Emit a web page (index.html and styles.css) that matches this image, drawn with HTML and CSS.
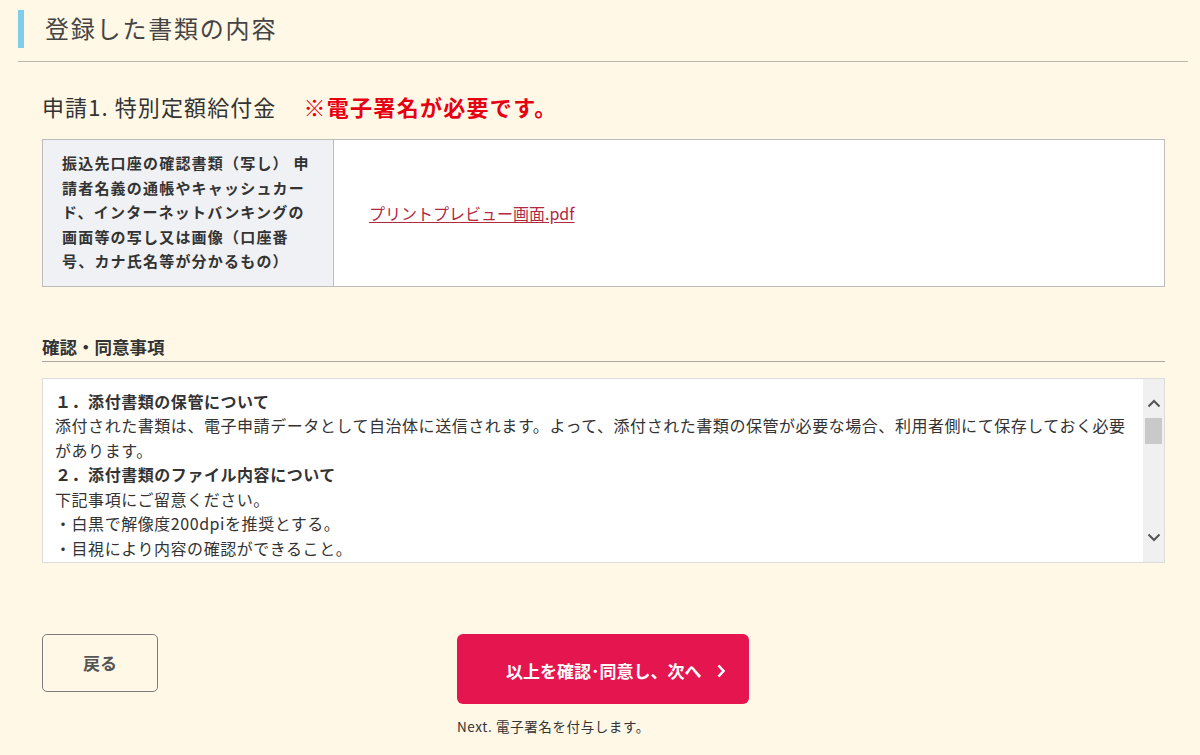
FILE: index.html
```html
<!DOCTYPE html>
<html lang="ja">
<head>
<meta charset="utf-8">
<title>登録した書類の内容</title>
<link rel="stylesheet" href="styles.css">
</head>
<body>
<div class="page">
  <header class="page-head">
    <h1 class="page-title">登録した書類の内容</h1>
  </header>

  <section class="content">
    <h2 class="apply-title">申請1. 特別定額給付金<span class="warn">※電子署名が必要です。</span></h2>

    <table class="doc-table">
      <tr>
        <th class="doc-label">振込先口座の確認書類（写し） 申<br>請者名義の通帳やキャッシュカー<br>ド、インターネットバンキングの<br>画面等の写し又は画像（口座番<br>号、カナ氏名等が分かるもの）</th>
        <td class="doc-file"><a href="#" class="file-link">プリントプレビュー画面.pdf</a></td>
      </tr>
    </table>

    <h3 class="agree-title">確認・同意事項</h3>

    <div class="agree-box">
      <div class="agree-text">
        <p class="agree-h">１．添付書類の保管について</p>
        <p>添付された書類は、電子申請データとして自治体に送信されます。よって、添付された書類の保管が必要な場合、利用者側にて保存しておく必要があります。</p>
        <p class="agree-h">２．添付書類のファイル内容について</p>
        <p>下記事項にご留意ください。</p>
        <p>・白黒で解像度200dpiを推奨とする。</p>
        <p>・目視により内容の確認ができること。</p>
      </div>
      <div class="fake-scroll">
        <svg class="sc-arrow" width="14" height="9" viewBox="0 0 14 9"><path d="M1.5 7.5 L7 2 L12.5 7.5" fill="none" stroke="#555" stroke-width="2"/></svg>
        <div class="sc-track"><div class="sc-thumb"></div></div>
        <svg class="sc-arrow" width="14" height="9" viewBox="0 0 14 9"><path d="M1.5 1.5 L7 7 L12.5 1.5" fill="none" stroke="#555" stroke-width="2"/></svg>
      </div>
    </div>

    <div class="actions">
      <button class="btn-back" type="button">戻る</button>
      <div class="next-group">
        <button class="btn-next" type="button">以上を確認･同意し、次へ<svg class="chev" width="10" height="14" viewBox="0 0 10 14"><path d="M2.5 1.5 L7.5 7 L2.5 12.5" fill="none" stroke="#fff" stroke-width="2.6"/></svg></button>
        <p class="next-note">Next. 電子署名を付与します。</p>
      </div>
    </div>
  </section>
</div>
</body>
</html>
```

FILE: styles.css
```css
html, body {
  margin: 0;
  padding: 0;
  background: #fff8e6;
}
body {
  font-family: "Noto Sans CJK JP", "Noto Sans", sans-serif;
  color: #333;
  width: 1200px;
  height: 755px;
  overflow: hidden;
}
.page {
  padding: 10px 12px 0 18px;
}
.page-head {
  border-bottom: 1px solid #b9b6ae;
  padding-bottom: 13px;
}
.page-title {
  margin: 0;
  height: 38px;
  border-left: 6px solid #7fcdea;
  padding-left: 21px;
  font-size: 24px;
  letter-spacing: 1.8px;
  font-weight: normal;
  line-height: 36px;
  color: #444;
}
.content {
  padding: 0 23px 0 24px;
}
.apply-title {
  margin: 29px 0 0 0;
  font-size: 22px;
  line-height: 30px;
  font-weight: normal;
  color: #333;
  letter-spacing: 1.1px;
}
.warn {
  margin-left: 27px;
  color: #e60012;
  font-weight: bold;
  font-size: 22px;
  letter-spacing: 1.3px;
}
.doc-table {
  margin-top: 18px;
  width: 100%;
  border-collapse: collapse;
  background: #fff;
}
.doc-label {
  width: 252px;
  background: #eff1f4;
  border: 1px solid #bcbcbc;
  padding: 11px 19px 12px 19px;
  text-align: left;
  font-size: 15px;
  letter-spacing: 1.2px;
  line-height: 24.5px;
  font-weight: bold;
  white-space: nowrap;
  color: #333;
}
.doc-file {
  border: 1px solid #bcbcbc;
  padding: 0 0 0 35px;
  vertical-align: middle;
}
.file-link {
  color: #b2283f;
  font-size: 16px;
  text-decoration: underline;
  text-underline-offset: 2px;
}
.agree-title {
  margin: 47px 0 0 0;
  font-size: 17.5px;
  line-height: 26px;
  font-weight: bold;
  padding-bottom: 1px;
  border-bottom: 1px solid #a9a6a0;
  color: #333;
}
.agree-box {
  margin-top: 16px;
  height: 183px;
  border: 1px solid #dcdcdc;
  background: #fff;
  display: flex;
  overflow: hidden;
}
.agree-text {
  flex: 1;
  padding: 10px 4px 0 12px;
  overflow: hidden;
  font-size: 16px;
  letter-spacing: 0.55px;
  line-height: 24.5px;
  color: #333;
}
.agree-text p {
  margin: 0;
}
.agree-text .agree-h {
  font-weight: bold;
}
.fake-scroll {
  width: 21px;
  background: #f0f0f0;
  display: flex;
  flex-direction: column;
  align-items: center;
  padding-top: 20px;
  box-sizing: border-box;
}
.sc-arrow {
  display: block;
  flex: none;
}
.sc-track {
  flex: 1;
  width: 100%;
  padding-top: 10px;
}
.sc-thumb {
  margin: 0 auto;
  width: 17px;
  height: 26px;
  background: #c9c9c9;
}
.fake-scroll .sc-arrow:last-child {
  margin-bottom: 20px;
}
.actions {
  margin-top: 71px;
  display: flex;
  align-items: flex-start;
}
.btn-back {
  width: 116px;
  height: 58px;
  border: 1px solid #7d7d7d;
  border-radius: 5px;
  background: transparent;
  font-family: inherit;
  font-size: 17px;
  font-weight: bold;
  color: #555;
  padding: 0;
  margin: 0;
}
.next-group {
  margin-left: 299px;
}
.btn-next {
  width: 292px;
  height: 70px;
  border: none;
  border-radius: 6px;
  background: #e5164f;
  color: #fff;
  font-family: inherit;
  font-size: 17px;
  font-weight: bold;
  display: flex;
  align-items: center;
  padding: 4px 0 0 49px;
  margin: 0;
  box-sizing: border-box;
}
.chev {
  margin-left: 14px;
}
.next-note {
  margin: 13px 0 0 0;
  font-size: 13.5px;
  letter-spacing: 0.6px;
  line-height: 18px;
  color: #333;
}
```
